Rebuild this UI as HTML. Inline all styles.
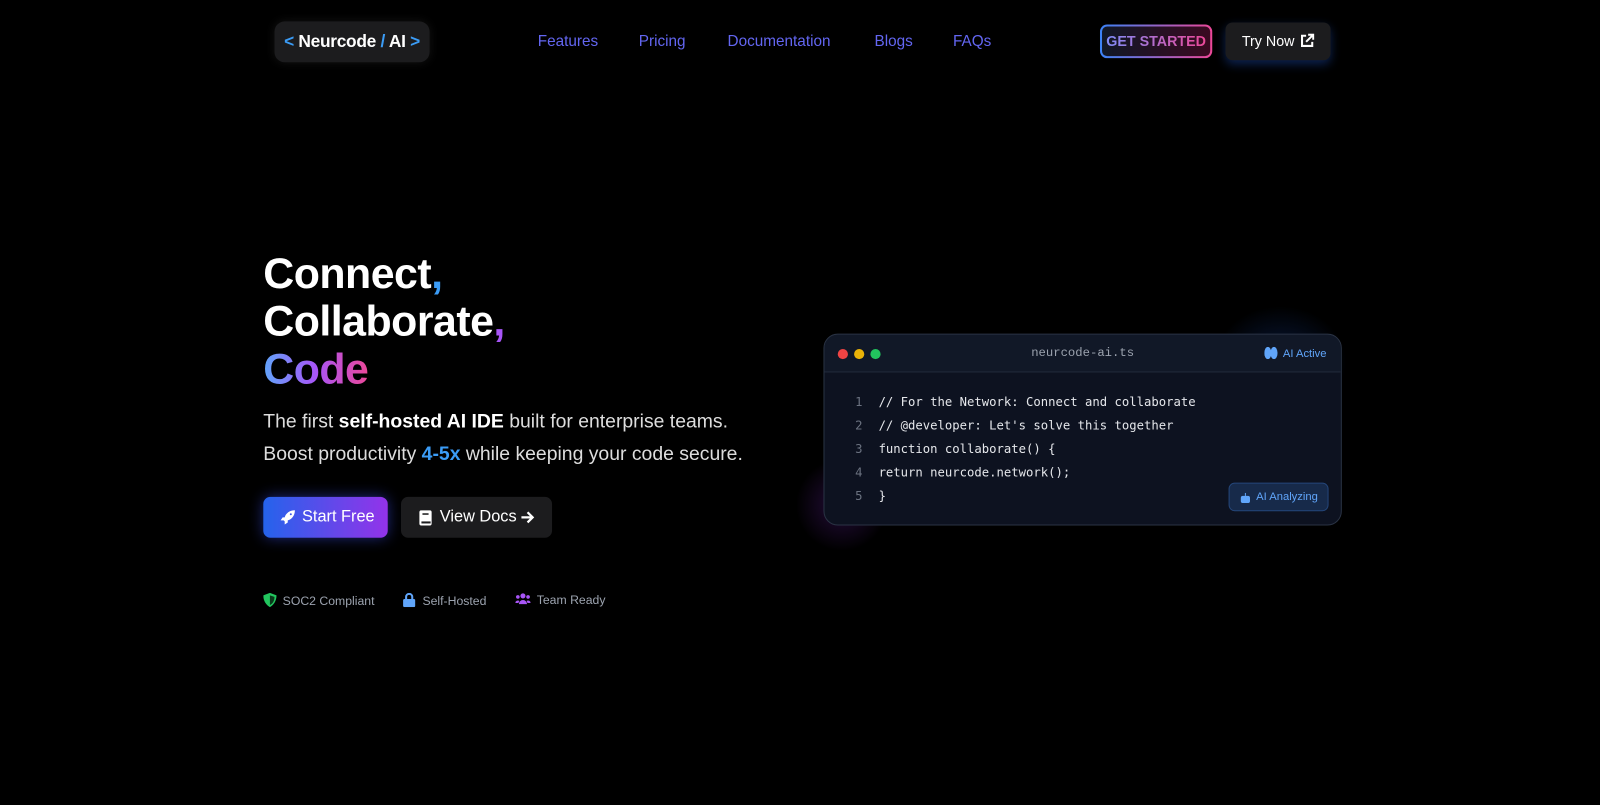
<!DOCTYPE html>
<html><head><meta charset="utf-8"><style>
*{margin:0;padding:0;box-sizing:border-box}
body{width:1600px;height:805px;background:#000;overflow:hidden}
#w{width:1568px;height:789px;transform:scale(1.0204);transform-origin:0 0;font-family:"Liberation Sans",sans-serif;color:#fff;position:relative}
.logo{position:absolute;left:269px;top:21px;width:152px;height:40px;background:#1c1c1e;border-radius:10px;box-shadow:0 0 10px rgba(255,255,255,.08);font-weight:bold;font-size:17px;line-height:40px;text-align:center;letter-spacing:-.3px}
.b{color:#3b9cf6}
.nav{position:absolute;top:32px;font-size:15px;color:#6366f1}
.gs{position:absolute;left:1078px;top:24px;width:110px;height:33px;border-radius:7px;padding:2px;background:linear-gradient(90deg,#3b82f6,#ec4899)}
.gs div{width:100%;height:100%;border-radius:5px;background:linear-gradient(90deg,#111827,#3a0a22);font-weight:bold;font-size:14px;line-height:29px;text-align:center}
.gs span{background:linear-gradient(90deg,#818cf8,#ec4899);-webkit-background-clip:text;color:transparent}
.try{position:absolute;left:1201px;top:22px;width:103px;height:37px;background:#1c1c1e;border-radius:7px;font-size:14px;line-height:37px;padding-left:16px;box-shadow:0 4px 10px rgba(37,99,235,.35)}
h1{position:absolute;left:258px;top:244px;font-size:42px;line-height:47px;letter-spacing:-.5px}
.sub{position:absolute;left:258px;top:398px;font-size:19px;line-height:32px;color:#ddd}
.btn1{position:absolute;left:258px;top:487px;width:122px;height:40px;border-radius:7px;background:linear-gradient(90deg,#2563eb,#9333ea);box-shadow:0 0 14px rgba(59,80,246,.5);font-size:16px;line-height:40px;padding-left:38px}
.btn2{position:absolute;left:393px;top:487px;width:148px;height:40px;border-radius:7px;background:#1c1c1e;font-size:16px;line-height:40px;padding-left:38px}
.badges{position:absolute;top:581px;font-size:12px;color:#9ca3af}
.card{position:absolute;left:807px;top:327px;width:508px;height:188px;border-radius:14px;border:1px solid #2a3344;background:#0d1220;overflow:hidden}
.hd{height:37px;border-bottom:1px solid #222b3a;background:#111827;position:relative}
.dot{position:absolute;top:14px;width:10px;height:10px;border-radius:50%}
.fn{position:absolute;left:0;right:0;text-align:center;top:11px;font-family:"Liberation Mono",monospace;font-size:12px;color:#9ca3af}
.code{font-family:"DejaVu Sans Mono","Liberation Mono",monospace;font-size:12px;color:#e5e7eb;position:absolute;top:55px;left:30px;line-height:23px}
.code span{display:inline-block;width:23px;color:#6b7280}
.ana{position:absolute;left:396px;top:145px;width:98px;height:28px;border-radius:6px;background:#172a4a;border:1px solid #24467a;color:#60a5fa;font-size:11px;line-height:26px;padding-left:26px}
</style></head><body><div id="w">
<div class="logo"><span class="b">&lt;</span> Neurcode <span class="b">/</span> AI <span class="b">&gt;</span></div>
<div class="nav" style="left:527px">Features</div>
<div class="nav" style="left:626px">Pricing</div>
<div class="nav" style="left:713px">Documentation</div>
<div class="nav" style="left:857px">Blogs</div>
<div class="nav" style="left:934px">FAQs</div>
<div class="gs"><div><span>GET STARTED</span></div></div>
<div class="try">Try Now <svg width="14" height="14" viewBox="0 0 14 14" style="position:absolute;left:73px;top:11px" fill="none" stroke="#fff" stroke-width="2"><path d="M6 2H2v10h10V8M8 1h5v5M13 1L6 8"/></svg></div>
<div style="position:absolute;left:1190px;top:300px;width:130px;height:110px;background:radial-gradient(closest-side,rgba(37,99,235,.25),transparent)"></div>
<div style="position:absolute;left:780px;top:450px;width:90px;height:90px;background:radial-gradient(closest-side,rgba(147,51,234,.25),transparent)"></div>
<h1>Connect<span class="b">,</span><br>Collaborate<span style="color:#a855f7">,</span><br><span style="background:linear-gradient(90deg,#60a5fa,#a855f7,#ec4899);-webkit-background-clip:text;color:transparent">Code</span></h1>
<div class="sub">The first <b style="color:#fff">self-hosted AI IDE</b> built for enterprise teams.<br>Boost productivity <b class="b">4-5x</b> while keeping your code secure.</div>
<div class="btn1"><svg width="16" height="16" viewBox="0 0 16 16" style="position:absolute;left:16px;top:12px"><path d="M15 1C10 1 6 4 5 8L3 8 1 11h3l1 1v3l3-2v-2c4-1 7-5 7-10zM11 4a1 1 0 1 1 0 2 1 1 0 0 1 0-2z" fill="#fff"/></svg>Start Free</div>
<div class="btn2"><svg width="14" height="15" viewBox="0 0 14 15" style="position:absolute;left:17px;top:13px"><rect x="1" y="0" width="12" height="15" rx="2" fill="#fff"/><rect x="3" y="11" width="9" height="2" fill="#1c1c1e"/><rect x="4" y="3" width="6" height="1.5" fill="#1c1c1e"/></svg>View Docs <svg width="14" height="14" viewBox="0 0 14 14" style="position:absolute;left:117px;top:13px" fill="none" stroke="#fff" stroke-width="2.2"><path d="M1 7h11M7 2l5 5-5 5"/></svg></div>
<div class="badges" style="left:258px"><svg width="13" height="14" viewBox="0 0 13 14" style="vertical-align:-2px;margin-right:6px"><path d="M6.5 0L13 2.5C13 8 10 12 6.5 14 3 12 0 8 0 2.5z" fill="#22c55e"/><path d="M6.5 2.5L11 4c0 4-2 7-4.5 8z" fill="#0a3a1c"/></svg>SOC2 Compliant</div>
<div class="badges" style="left:395px"><svg width="12" height="14" viewBox="0 0 12 14" style="vertical-align:-2px;margin-right:7px"><path d="M3 6V4a3 3 0 0 1 6 0v2" stroke="#60a5fa" stroke-width="2" fill="none"/><rect x="0" y="6" width="12" height="8" rx="1.5" fill="#60a5fa"/></svg>Self-Hosted</div>
<div class="badges" style="left:505px"><svg width="15" height="12" viewBox="0 0 15 12" style="vertical-align:-1px;margin-right:6px" fill="#a855f7"><circle cx="7.5" cy="3" r="2.5"/><circle cx="2.5" cy="4" r="1.8"/><circle cx="12.5" cy="4" r="1.8"/><path d="M3.5 11a4 4 0 0 1 8 0z"/><path d="M0 10a2.5 2.5 0 0 1 4-2L3 10z"/><path d="M15 10a2.5 2.5 0 0 0-4-2l1 2z"/></svg>Team Ready</div>
<div class="card">
<div class="hd"><div class="dot" style="left:13px;background:#ef4444"></div><div class="dot" style="left:29px;background:#eab308"></div><div class="dot" style="left:45px;background:#22c55e"></div>
<div class="fn">neurcode-ai.ts</div>
<div style="position:absolute;right:14px;top:12px;font-size:11px;color:#60a5fa"><svg width="13" height="12" viewBox="0 0 13 12" style="vertical-align:-2px;margin-right:5px" fill="#60a5fa"><ellipse cx="3.5" cy="6" rx="3.5" ry="6"/><ellipse cx="9.5" cy="6" rx="3.5" ry="6"/></svg>AI Active</div></div>
<div class="code"><span>1</span>// For the Network: Connect and collaborate<br><span>2</span>// @developer: Let's solve this together<br><span>3</span>function collaborate() {<br><span>4</span>return neurcode.network();<br><span>5</span>}</div>
<div class="ana"><svg width="11" height="10" viewBox="0 0 11 10" style="position:absolute;left:10px;top:9px" fill="#60a5fa"><rect x="1" y="3" width="9" height="7" rx="2"/><rect x="5" y="0" width="1" height="3"/></svg>AI Analyzing</div>
</div>
</div></body></html>
